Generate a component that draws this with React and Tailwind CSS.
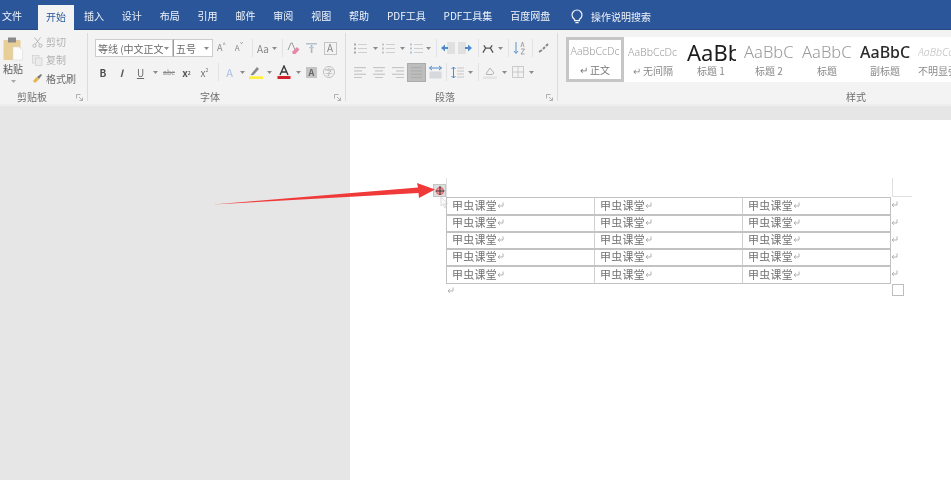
const cjk = { fontFamily: '"Noto Sans CJK SC", "Noto Sans", sans-serif' };

const tabs = ["插入", "设计", "布局", "引用", "邮件", "审阅", "视图", "帮助", "PDF工具", "PDF工具集", "百度网盘"];

const Drop = ({ className = "w-[10px]" }) => (
  <div className={`flex justify-center ${className}`}>
    <svg width="5" height="3" viewBox="0 0 5 3"><path d="M0 0h5L2.5 3z" fill="#8c8c8c" /></svg>
  </div>
);

const Sep = ({ className = "w-[8px]" }) => (
  <div className={`flex justify-center h-[18px] ${className}`}>
    <div className="w-px h-full bg-[#e2e2e2]" />
  </div>
);

const Slot = ({ className, children }) => (
  <div className={`flex items-center justify-center h-[18px] ${className}`}>{children}</div>
);

const Lines = ({ rows, color = "#c6c6c6" }) => (
  <svg width="12" height="11" viewBox="0 0 12 11">
    {rows.map(([x, w], i) => (
      <rect key={i} x={x} y={i * (10 / (rows.length - 1))} width={w} height="1.2" fill={color} />
    ))}
  </svg>
);

const ListIcon = ({ mark = "#a8a8a8" }) => (
  <svg width="13" height="11" viewBox="0 0 13 11">
    <rect x="0" y="0.5" width="2" height="2" fill={mark} />
    <rect x="0" y="4.5" width="2" height="2" fill={mark} />
    <rect x="0" y="8.5" width="2" height="2" fill={mark} />
    <rect x="4" y="1" width="9" height="1" fill="#cfcfcf" />
    <rect x="4" y="5" width="9" height="1" fill="#cfcfcf" />
    <rect x="4" y="9" width="9" height="1" fill="#cfcfcf" />
  </svg>
);

const IndentIcon = ({ flip }) => (
  <svg width="14" height="12" viewBox="0 0 14 12" className={flip ? "-scale-x-100" : ""}>
    <rect x="6" y="0" width="8" height="12" fill="#e0e0e0" />
    <path d="M0 6l4-3.5V5h3v2H4v2.5z" fill="#4f8acb" />
  </svg>
);

const Launcher = () => (
  <svg width="7" height="7" viewBox="0 0 7 7" className="justify-self-end">
    <path d="M0.5 0.5h4M0.5 0.5v4M3 3l3.5 3.5M6.5 3.5v3h-3" stroke="#a8a8a8" strokeWidth="0.9" fill="none" />
  </svg>
);

const GroupLabel = ({ children, className }) => (
  <div className={`grid items-center h-[14px] mt-auto ${className}`}>
    <div />
    <span className="text-[10px] leading-none text-[#707070]">{children}</span>
    <Launcher />
  </div>
);

const GroupSep = () => <div className="w-px my-[3px] bg-[#dcdcdc] shrink-0" />;

const sans = { fontFamily: '"Noto Sans", sans-serif' };

const styleItems = [
  { name: "↵ 无间隔", sample: "AaBbCcDc", cls: "ml-[4px] w-[54px] text-[10.5px] font-light text-[#9c9c9c]" },
  { name: "标题 1", sample: "AaBbC", cls: "ml-[5px] w-[49px] text-[22px] text-[#1c1c1c]" },
  { name: "标题 2", sample: "AaBbC", cls: "ml-[4px] w-[54px] text-[16.5px] font-light text-[#9a9a9a]" },
  { name: "标题", sample: "AaBbC", cls: "ml-[4px] w-[54px] text-[16.5px] font-light text-[#9a9a9a]" },
  { name: "副标题", sample: "AaBbC", cls: "ml-[4px] w-[54px] text-[16px] font-medium text-[#2a2a2a]" },
  { name: "不明显强调", sample: "AaBbCcDc", cls: "ml-[4px] w-[54px] text-[10.5px] font-light italic text-[#bcbcbc]" },
];

const ReturnMark = ({ color = "#a9a9a9" }) => (
  <svg width="7" height="7" viewBox="0 0 7 7" className="shrink-0">
    <path d="M6 0.5v3.5H1M2.8 2.2L1 4l1.8 1.8" fill="none" stroke={color} strokeWidth="0.9" />
  </svg>
);

const Cell = ({ last }) => (
  <div className={`flex items-center pl-[5px] pb-[2px] h-full ${last ? "" : "border-r border-[#d0d0d0]"}`}>
    <span className="text-[11px] leading-none tracking-[0.25px] text-[#727272]">甲虫课堂</span>
    <ReturnMark />
  </div>
);

export default function App() {
  return (
    <div className="relative w-[951px] h-[480px] overflow-hidden bg-[#e6e6e6] blur-[0.5px]" style={cjk}>
      {/* title tabs */}
      <div className="flex items-end h-[30px] bg-[#2b579a] border-b border-[#24497f] text-[10px] text-[#f1f4f9]">
        <div className="ml-[2px] w-[36px] h-[23px] leading-[20px]">文件</div>
        <div className="w-[36px] h-[25px] mb-[-1px] leading-[24px] text-center bg-[#f3f3f3] text-[#2b579a]">开始</div>
        <div className="flex ml-[1px]">
          {tabs.map((t) => (
            <div key={t} className="px-[8.95px] h-[23px] leading-[20px] whitespace-nowrap">{t}</div>
          ))}
        </div>
        <div className="flex items-center h-[23px] pb-[3px] ml-[12px] gap-[8px]">
          <svg width="12" height="15" viewBox="0 0 12 15" fill="none" stroke="#f1f4f9" strokeWidth="1.2">
            <path d="M3.6 10.4C2 9.2 1 7.8 1 6a5 5 0 0 1 10 0c0 1.8-1 3.2-2.6 4.4v1.2H3.6zM4.4 13.6h3.2" />
          </svg>
          <span>操作说明搜索</span>
        </div>
      </div>

      {/* ribbon */}
      <div className="flex h-[74px] bg-[#f3f3f3] text-[#5f5f5f]">
        {/* clipboard */}
        <div className="flex flex-col w-[87px] shrink-0 pr-[2px]">
          <div className="flex h-[60px]">
            <div className="flex flex-col items-center w-[26px] pt-[7px]">
              <svg width="20" height="24" viewBox="0 0 20 24">
                <rect x="0.5" y="3" width="17" height="20" rx="1" fill="#e8cf98" />
                <rect x="5" y="0.5" width="8" height="5" fill="#8a8a8a" />
                <path d="M10 10h6l3.5 3.5V23H10z" fill="#fbfbfb" stroke="#dcdcdc" strokeWidth="0.6" />
              </svg>
              <span className="text-[10px] leading-none mt-[3px] text-[#5c5c5c]">粘贴</span>
              <svg width="5" height="3" viewBox="0 0 5 3" className="mt-[6px]"><path d="M0 0h5L2.5 3z" fill="#a8a8a8" /></svg>
            </div>
            <div className="flex flex-col ml-[6px] pt-[3px] text-[10px] leading-none">
              <div className="flex items-center gap-[3px] h-[18px] text-[#b2b2b2]">
                <svg width="11" height="11" viewBox="0 0 11 11" fill="none" stroke="#b0b0b0" strokeWidth="0.9">
                  <path d="M2.5 0.5l5 6.5M8.5 0.5l-5 6.5" />
                  <circle cx="2.5" cy="8.7" r="1.6" />
                  <circle cx="8.5" cy="8.7" r="1.6" />
                </svg>
                <span>剪切</span>
              </div>
              <div className="flex items-center gap-[3px] h-[18px] text-[#b2b2b2]">
                <svg width="11" height="11" viewBox="0 0 11 11" fill="#ebebeb" stroke="#cfcfcf" strokeWidth="0.7">
                  <rect x="0.5" y="0.5" width="6.5" height="7.5" />
                  <rect x="3.5" y="3" width="6.5" height="7.5" />
                </svg>
                <span>复制</span>
              </div>
              <div className="flex items-center gap-[3px] h-[19px] text-[#6c6c6c]">
                <svg width="11" height="11" viewBox="0 0 11 11">
                  <path d="M5 4l4-3 1 1-3 4z" fill="#777" />
                  <path d="M1 8l3.5-4L7 6.5 3 10z" fill="#e8b64c" />
                </svg>
                <span>格式刷</span>
              </div>
            </div>
          </div>
          <GroupLabel className="grid-cols-[17px_auto_1fr] pr-[2px]">剪贴板</GroupLabel>
        </div>
        <GroupSep />

        {/* font */}
        <div className="flex flex-col w-[257px] shrink-0">
          <div className="flex flex-col h-[60px] pt-[9px] gap-[6px]">
            <div className="flex items-center h-[18px] pl-[7px]">
              <div className="flex items-center justify-between w-[78px] h-[18px] pl-[2px] pr-[3px] bg-white border border-[#cdcdcd] text-[10px] text-[#6a6a6a]">
                <span className="whitespace-nowrap overflow-hidden">等线 (中文正文</span>
                <Drop className="w-[5px] shrink-0" />
              </div>
              <div className="flex items-center justify-between w-[40px] h-[18px] pl-[2px] pr-[3px] bg-white border border-l-[#9a9a9a] border-[#cdcdcd] text-[10px] text-[#6a6a6a]">
                <span>五号</span>
                <Drop className="w-[5px]" />
              </div>
              <Slot className="w-[17px] text-[9px] text-[#8a8a8a]">A<sup className="text-[6px]">^</sup></Slot>
              <Slot className="w-[18px] text-[8px] text-[#8a8a8a]">A<sup className="text-[6px]">ˇ</sup></Slot>
              <Sep className="w-[9px]" />
              <Slot className="w-[12px] text-[10px] text-[#8a8a8a]">Aa</Slot>
              <Drop />
              <Sep className="w-[6px]" />
              <Slot className="w-[17px]">
                <svg width="13" height="13" viewBox="0 0 13 13">
                  <path d="M1 8L4 1h1.2L8 8" fill="none" stroke="#9a9a9a" strokeWidth="1" />
                  <path d="M5 10l5-5 2.5 2.5-4 4.5H6z" fill="#e58aa6" />
                </svg>
              </Slot>
              <Slot className="w-[19px]">
                <svg width="11" height="12" viewBox="0 0 11 12">
                  <rect x="0" y="1" width="11" height="1.5" fill="#b5c0cc" />
                  <rect x="4.8" y="3" width="1.6" height="8" fill="#b5b5b5" />
                  <rect x="3" y="5" width="5" height="1.2" fill="#b5cce0" />
                </svg>
              </Slot>
              <Slot className="w-[18px]">
                <div className="flex items-center justify-center w-[13px] h-[13px] border border-[#c4c4c4] text-[10px] leading-none text-[#888]">A</div>
              </Slot>
            </div>
            <div className="flex items-center h-[18px] pl-[6px]">
              <Slot className="w-[18px] text-[10px] font-bold text-[#4c4c4c]">B</Slot>
              <Slot className="w-[19px] text-[10px] font-bold italic text-[#5c5c5c]">I</Slot>
              <Slot className="w-[19px] text-[10px] text-[#6a6a6a] underline">U</Slot>
              <Drop />
              <Slot className="w-[18px] text-[7px] text-[#888] line-through">abc</Slot>
              <Slot className="w-[17px] text-[10px] font-bold text-[#5a5a5a]">x<sub className="text-[5px]">2</sub></Slot>
              <Slot className="w-[19px] text-[10px] text-[#777]">x<sup className="text-[5px]">2</sup></Slot>
              <Sep />
              <Slot className="w-[15px] text-[11px] text-[#a9c2e2]">A</Slot>
              <Drop />
              <Slot className="w-[18px]">
                <svg width="14" height="13" viewBox="0 0 14 13">
                  <path d="M3 7l5-6 2 2-5 5.5zM1.5 9l1.5-2 2 1.5-1 .8z" fill="#8a8a8a" />
                  <rect x="0" y="10.3" width="14" height="2.7" fill="#ffef3d" />
                </svg>
              </Slot>
              <Drop className="w-[9px]" />
              <Slot className="w-[19px]">
                <svg width="14" height="14" viewBox="0 0 14 14">
                  <path d="M3 10L7 1l4 9M4.6 7h4.8" fill="none" stroke="#3b3b3b" strokeWidth="1.4" />
                  <rect x="0.5" y="11" width="13" height="3" fill="#d1202a" />
                </svg>
              </Slot>
              <Drop />
              <Slot className="w-[17px]">
                <div className="flex items-center justify-center w-[11px] h-[11px] bg-[#c4c4c4] text-[9px] leading-none font-bold text-[#666]">A</div>
              </Slot>
              <Slot className="w-[18px]">
                <div className="flex items-center justify-center w-[12px] h-[12px] rounded-full border border-[#bfbfbf] text-[8px] leading-none text-[#a8a8a8]">字</div>
              </Slot>
            </div>
          </div>
          <GroupLabel className="grid-cols-[112px_auto_1fr] pr-[4px]">字体</GroupLabel>
        </div>
        <GroupSep />

        {/* paragraph */}
        <div className="flex flex-col w-[211px] shrink-0">
          <div className="flex flex-col h-[60px] pt-[9px] gap-[6px]">
            <div className="flex items-center h-[18px] pl-[6px]">
              <Slot className="w-[17px]"><ListIcon /></Slot>
              <Drop className="w-[12px]" />
              <Slot className="w-[15px]"><ListIcon mark="#c4c4c4" /></Slot>
              <Drop className="w-[12px]" />
              <Slot className="w-[17px]"><ListIcon mark="#b5c4d2" /></Slot>
              <Drop className="w-[7px]" />
              <Sep />
              <Slot className="w-[16px]"><IndentIcon /></Slot>
              <Slot className="w-[18px]"><IndentIcon flip /></Slot>
              <Sep />
              <Slot className="w-[12px]">
                <svg width="13" height="11" viewBox="0 0 13 11">
                  <path d="M1 10l3-5-2-3M12 10L9 5l2-3M3 5h7" fill="none" stroke="#555" strokeWidth="1.4" />
                </svg>
              </Slot>
              <Drop className="w-[12px]" />
              <Sep className="w-[4px]" />
              <Slot className="w-[18px]">
                <svg width="13" height="14" viewBox="0 0 13 14">
                  <path d="M3 1v11M1 10l2 2.5L5 10" fill="none" stroke="#5a93cc" strokeWidth="1" />
                  <path d="M8 6l1.5-5L11 6M8 8h3.5L8 13h3.5" fill="none" stroke="#999" strokeWidth="0.9" />
                </svg>
              </Slot>
              <Sep />
              <Slot className="w-[14px]">
                <svg width="11" height="10" viewBox="0 0 11 10">
                  <path d="M1 9l3-2M5 6l2-2M8 3l2-2" stroke="#888" strokeWidth="2" fill="none" />
                </svg>
              </Slot>
            </div>
            <div className="flex items-center h-[18px] pl-[5px]">
              <Slot className="w-[18px]"><Lines rows={[[0, 12], [0, 8], [0, 12], [0, 8]]} /></Slot>
              <Slot className="w-[19px]"><Lines rows={[[0, 12], [2, 8], [0, 12], [2, 8]]} /></Slot>
              <Slot className="w-[19px]"><Lines rows={[[0, 12], [4, 8], [0, 12], [4, 8]]} /></Slot>
              <div className="flex items-center justify-center w-[19px] h-[19px] bg-[#bdbdbd] border border-[#ababab]">
                <Lines rows={[[0, 11], [0, 11], [0, 11], [0, 11]]} color="#adadad" />
              </div>
              <Slot className="w-[18px]">
                <svg width="13" height="14" viewBox="0 0 13 14">
                  <path d="M0.5 3h12M3 1L0.5 3 3 5M10 1l2.5 2L10 5" fill="none" stroke="#4f8acb" strokeWidth="1" />
                  <rect x="0.5" y="6.5" width="12" height="7" fill="#d5d8dd" />
                </svg>
              </Slot>
              <Sep className="w-[4px]" />
              <Slot className="w-[18px]">
                <svg width="13" height="13" viewBox="0 0 13 13">
                  <path d="M2.5 1v11M0.5 3l2-2 2 2M0.5 10l2 2 2-2" fill="none" stroke="#4f8acb" strokeWidth="1" />
                  <path d="M6 2h7M6 5h7M6 8h7M6 11h7" stroke="#c6c6c6" strokeWidth="1" />
                </svg>
              </Slot>
              <Drop className="w-[8px]" />
              <Sep />
              <Slot className="w-[16px]">
                <svg width="14" height="13" viewBox="0 0 14 13">
                  <path d="M3 8l4-6 4 5-2 1.5H4z" fill="none" stroke="#ababab" strokeWidth="0.9" />
                  <rect x="0" y="10.5" width="14" height="2.5" fill="#e4e4e4" />
                </svg>
              </Slot>
              <Drop className="w-[12px]" />
              <Slot className="w-[15px]">
                <svg width="12" height="12" viewBox="0 0 12 12">
                  <path d="M0.5 0.5h11v11h-11zM6 0.5v11M0.5 6h11" fill="none" stroke="#c4c4c4" strokeWidth="0.9" />
                </svg>
              </Slot>
              <Drop className="w-[12px]" />
            </div>
          </div>
          <GroupLabel className="grid-cols-[89px_auto_1fr] pr-[4px]">段落</GroupLabel>
        </div>
        <GroupSep />

        {/* styles */}
        <div className="flex flex-col flex-1 min-w-0 overflow-hidden">
          <div className="flex h-[60px] pt-[7px] pl-[8px]">
            <div className="flex h-[45px] bg-white">
              <div className="flex flex-col items-center w-[58px] border-[3px] border-[#c6c6c6] shrink-0 overflow-hidden">
                <div className="h-[23px] leading-[22px] text-[10.5px] font-light text-[#9c9c9c] whitespace-nowrap" style={sans}>AaBbCcDc</div>
                <div className="flex items-center text-[10px] leading-none text-[#777] mt-[2px]">↵ 正文</div>
              </div>
              {styleItems.map((s) => (
                <div key={s.name} className="flex flex-col items-center w-[58px] shrink-0 overflow-hidden">
                  <div className={`self-start h-[24px] overflow-hidden whitespace-nowrap mt-[3px] leading-[24px] ${s.cls}`} style={sans}>{s.sample}</div>
                  <div className="text-[10px] leading-none text-[#8a8a8a] mt-[2px] whitespace-nowrap">{s.name}</div>
                </div>
              ))}
            </div>
          </div>
          <div className="flex items-center h-[14px] mt-auto pl-[288px]">
            <span className="text-[10px] leading-none text-[#707070]">样式</span>
          </div>
        </div>
      </div>
      <div className="h-[2px] bg-[#ededed]" />

      {/* document page */}
      <div className="ml-[350px] mt-[14px] h-[360px] bg-white pt-[58px] pl-[96px]">
        <div className="relative w-[445px]">
          {/* crop marks */}
          <div className="w-px h-[19px] bg-[#e0e0e0]" />
          <div className="absolute left-[446px] top-0 w-px h-[19px] bg-[#e0e0e0]" />
          <div className="absolute left-[446px] top-[18px] w-[20px] h-px bg-[#e0e0e0]" />

          {/* table move handle */}
          <div className="absolute left-[-13px] top-[6px] w-[13px] h-[13px] bg-[#dedede] border border-[#c4c4c4]">
            <svg width="11" height="11" viewBox="0 0 11 11" className="block">
              <circle cx="6" cy="6" r="3.6" fill="#ef9a9f" stroke="#d9414a" strokeWidth="0.8" />
              <path d="M6 1v9M1.5 6h9" stroke="#3a3a3a" strokeWidth="1.1" />
            </svg>
          </div>
          {/* mouse pointer below the handle */}
          <svg className="absolute left-[-6px] top-[19px]" width="9" height="12" viewBox="0 0 9 12">
            <path d="M1 0v9l2.2-2 1.6 4 1.4-.6L4.6 6.6 7.5 6.4z" fill="#fafafa" stroke="#d4d4d4" strokeWidth="0.8" />
          </svg>

          <div className="relative border border-[#c2c2c2]">
            {[0, 1, 2, 3, 4].map((r) => (
              <div key={r} className={`relative grid grid-cols-[148px_148px_1fr] ${r === 0 ? "h-[16px]" : r === 4 ? "h-[18px] border-t-2 border-[#c2c2c2]" : "h-[17px] border-t-2 border-[#c2c2c2]"}`}>
                <Cell />
                <Cell />
                <Cell last />
                <div className="absolute right-[-8px] top-[3px]"><ReturnMark /></div>
              </div>
            ))}
          </div>
          <div className="flex items-start justify-between h-[14px]">
            <div className="pt-[3px] pl-[1px]"><ReturnMark /></div>
            <div className="w-[12px] h-[12px] mr-[-13px] border border-[#bdbdbd] bg-white" />
          </div>
        </div>
      </div>

      {/* red annotation arrow */}
      <svg className="absolute left-0 top-0 pointer-events-none" width="951" height="480" viewBox="0 0 951 480">
        <polygon points="213,204.5 418,187.5 417,183 435,189.5 419,198 418.5,193" fill="#f03a3a" />
      </svg>
    </div>
  );
}
